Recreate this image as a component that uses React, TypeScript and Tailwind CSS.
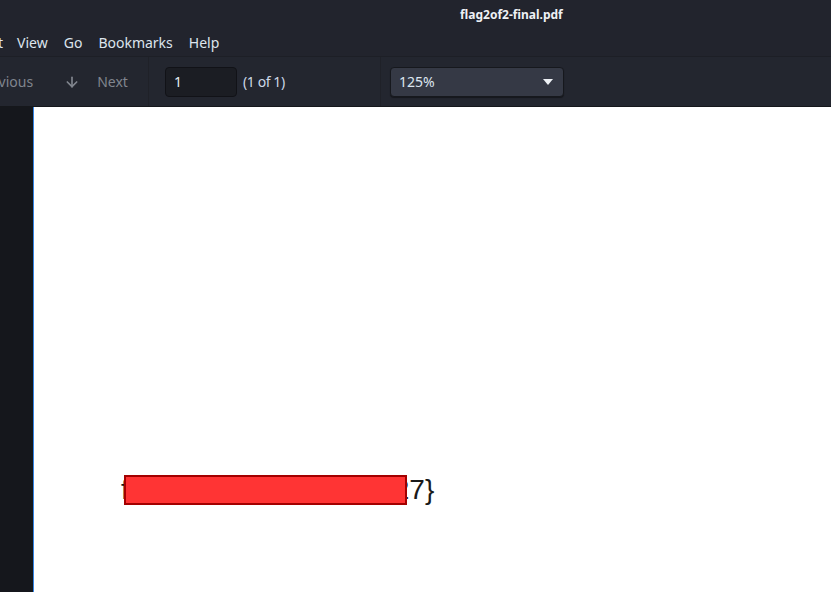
import { ArrowDown } from "lucide-react";

const App = () => {
    return (
        <div className="flex h-[592px] w-[831px] flex-col overflow-hidden bg-[#22242d] font-['Noto_Sans',sans-serif] text-[#dde5ee]">
            {/* Title bar */}
            <div className="flex h-[29px] shrink-0 items-center">
                <div className="w-[460px] shrink-0" />
                <span className="text-[12px] font-bold text-[#eef1f5]">flag2of2-final.pdf</span>
            </div>

            {/* Menu bar */}
            <div className="flex h-[28px] shrink-0 items-center border-b border-[#1d1f26] text-[14px]">
                <span className="-ml-[22px] mr-[14px]">Edit</span>
                <span className="mr-[16px]">View</span>
                <span className="mr-[16px]">Go</span>
                <span className="mr-[16px]">Bookmarks</span>
                <span>Help</span>
            </div>

            {/* Toolbar */}
            <div className="flex h-[50px] shrink-0 items-center border-b border-[#15171b] bg-[#23262f] text-[14px]">
                <div className="flex h-full w-[149px] shrink-0 items-center border-r border-[#1f2128] text-[#80858e]">
                    <span className="-ml-[23px]">Previous</span>
                    <ArrowDown className="ml-[31px] size-[16px]" strokeWidth={2.5} />
                    <span className="ml-[17px]">Next</span>
                </div>
                <div className="flex h-full w-[232px] shrink-0 items-center border-r border-[#1f2128] pl-[16px]">
                    <div className="flex h-[30px] w-[72px] items-center rounded-[4px] border border-[#111217] bg-[#1b1d23] px-[8px] text-[#e8eef5]">1</div>
                    <span className="ml-[6px] tracking-[-0.4px] text-[#cdd8e6]">(1 of 1)</span>
                </div>
                <div className="ml-[9px] flex h-[30px] w-[174px] items-center justify-between rounded-[4px] border border-[#16181d] bg-[#353945] pl-[8px] pr-[10px] text-[#dde6f0] shadow-[0_1px_1px_rgba(0,0,0,0.4)]">
                    <span>125%</span>
                    <svg width="10" height="6" viewBox="0 0 10 6" className="fill-[#eef1f5]">
                        <path d="M0 0h10L5 6z" />
                    </svg>
                </div>
            </div>

            {/* Content */}
            <div className="flex min-h-0 flex-1">
                <div className="w-[33px] shrink-0 bg-[#15171c]" />
                <div className="w-px shrink-0 bg-[#3584e4]" />
                <div className="flex flex-1 flex-col bg-white pl-[87px] pt-[367px]">
                    <div className="flex h-[32px] items-center font-['Liberation_Sans',Arial,sans-serif] text-[28px] leading-none text-[#1a1a1a]">
                        <span>f</span>
                        <div className="relative z-10 -ml-[5px] h-[30px] w-[283px] shrink-0 border-2 border-[#a30000] bg-[#ff3434]" />
                        <span className="-ml-[13px]">{"27}"}</span>
                    </div>
                </div>
            </div>
        </div>
    );
};

export default App;
